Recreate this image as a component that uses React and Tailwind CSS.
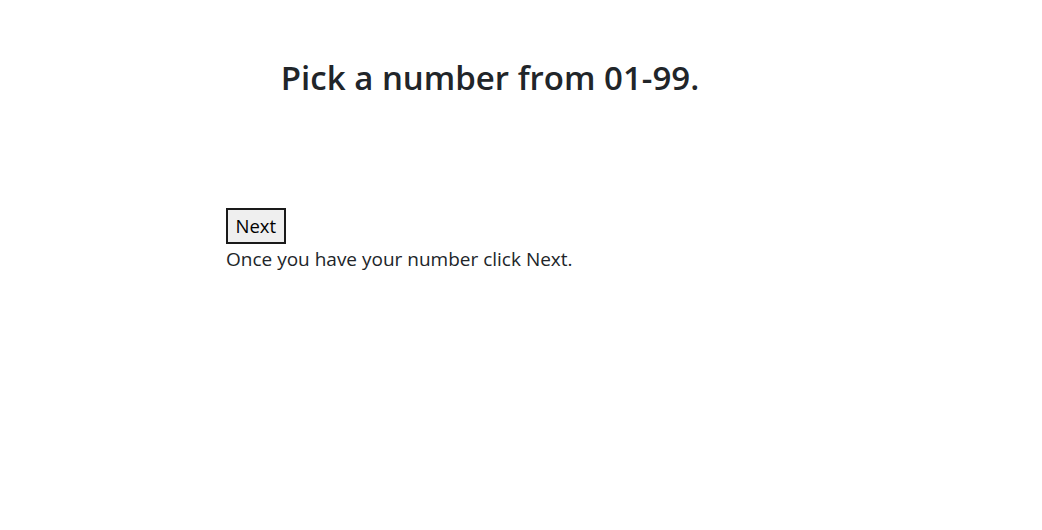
export default function App() {
    return (
        <div className="min-h-[530px] bg-white text-[#212529] font-['Open_Sans',sans-serif]">
            <div className="ml-[226px] w-[528px] pt-[54px]">
                <h1 className="text-center text-[33px] font-semibold leading-[48px]">
                    Pick a number from 01-99.
                </h1>
                <div className="mt-[106px]">
                    <button
                        type="button"
                        className="h-[36px] border-2 border-[#1a1a1a] bg-[#efefef] px-[7.5px] text-[18.5px] leading-none text-black"
                    >
                        Next
                    </button>
                    <p className="text-[19px] leading-[30px]">Once you have your number click Next.</p>
                </div>
            </div>
        </div>
    );
}
